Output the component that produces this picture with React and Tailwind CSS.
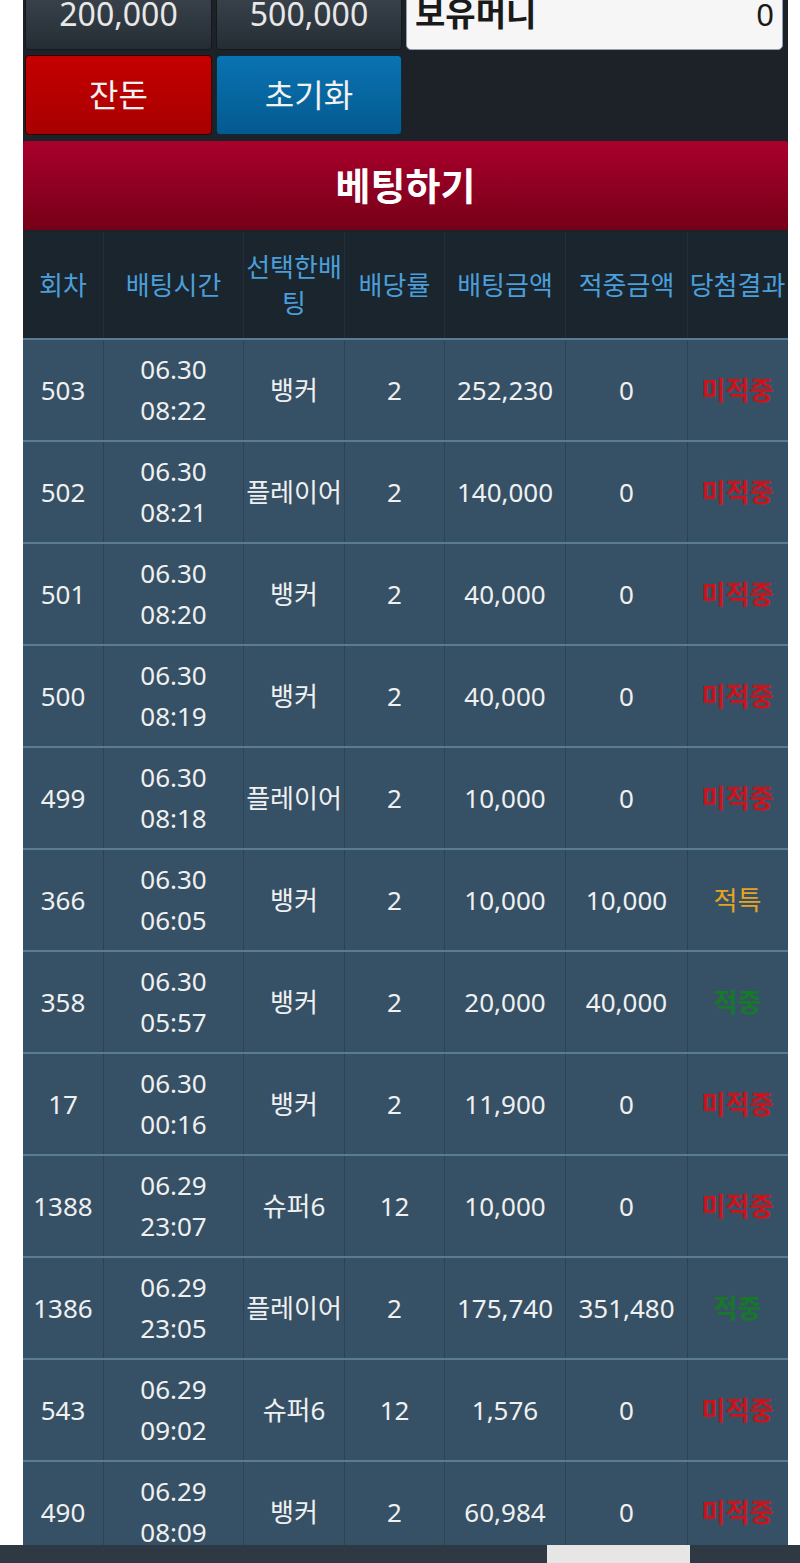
const rows = [
  ['503', '06.30', '08:22', '뱅커', '2', '252,230', '0', 'lose'],
  ['502', '06.30', '08:21', '플레이어', '2', '140,000', '0', 'lose'],
  ['501', '06.30', '08:20', '뱅커', '2', '40,000', '0', 'lose'],
  ['500', '06.30', '08:19', '뱅커', '2', '40,000', '0', 'lose'],
  ['499', '06.30', '08:18', '플레이어', '2', '10,000', '0', 'lose'],
  ['366', '06.30', '06:05', '뱅커', '2', '10,000', '10,000', 'push'],
  ['358', '06.30', '05:57', '뱅커', '2', '20,000', '40,000', 'win'],
  ['17', '06.30', '00:16', '뱅커', '2', '11,900', '0', 'lose'],
  ['1388', '06.29', '23:07', '슈퍼6', '12', '10,000', '0', 'lose'],
  ['1386', '06.29', '23:05', '플레이어', '2', '175,740', '351,480', 'win'],
  ['543', '06.29', '09:02', '슈퍼6', '12', '1,576', '0', 'lose'],
  ['490', '06.29', '08:09', '뱅커', '2', '60,984', '0', 'lose'],
];

const results = {
  lose: { label: '미적중', cls: 'text-[#c9141c] font-bold' },
  push: { label: '적특', cls: 'text-[#e6a321]' },
  win: { label: '적중', cls: 'text-[#17782a] font-bold' },
};

const cols = 'grid grid-cols-[80px_140px_101px_100px_121px_122px_100px]';

function Cell({ children, first, className = '' }) {
  return (
    <div className={`flex items-center justify-center text-center ${first ? '' : 'border-l border-[#2b4356]'} ${className}`}>
      {children}
    </div>
  );
}

export default function App() {
  return (
    <div className="min-h-[1563px] bg-white font-['Noto_Sans','Noto_Sans_CJK_KR',sans-serif] overflow-hidden">
      <div className="ml-[23px] w-[765px] bg-[#1c2227]">
        <div className="-mt-[30px] flex gap-[4px] pl-[2px] pr-[5px]">
          <button className="h-[80px] w-[187px] rounded-[4px] border border-[#15191d] bg-gradient-to-b from-[#434d57] to-[#252d34] pt-[30px] text-[32px] leading-none text-[#e8e8e8]">
            <span className="relative -top-[11px]">200,000</span>
          </button>
          <button className="h-[80px] w-[186px] rounded-[4px] border border-[#15191d] bg-gradient-to-b from-[#434d57] to-[#252d34] pt-[30px] text-[32px] leading-none text-[#e8e8e8]">
            <span className="relative -top-[11px]">500,000</span>
          </button>
          <div className="flex h-[80px] flex-1 items-end justify-between rounded-[5px] border border-[#8fa0b4] bg-[#f6f6f6] px-[8px] pb-[19px] text-[33px] leading-none text-[#1a1a1a]">
            <span className="font-bold">보유머니</span>
            <span className="text-[31px]">0</span>
          </div>
        </div>
        <div className="mt-[5px] flex gap-[4px] pl-[2px] pr-[5px]">
          <button className="h-[80px] w-[187px] rounded-[4px] border border-[#3a0000] bg-gradient-to-b from-[#c40000] to-[#a80000] text-[32px] text-[#f2f2f2]">
            잔돈
          </button>
          <button className="h-[80px] w-[186px] rounded-[4px] border border-[#0a2a40] bg-gradient-to-b from-[#0a73b2] to-[#045a8f] text-[32px] text-[#f2f2f2]">
            초기화
          </button>
        </div>
        <div className="mt-[6px] flex h-[89px] items-center justify-center rounded-t-[3px] bg-gradient-to-b from-[#aa002c] to-[#760018] text-[38px] font-bold text-white">
          베팅하기
        </div>
        <div className={`${cols} mt-[2px] h-[106px] bg-[#1b252e] text-[26px] leading-[36px] text-[#4a9fdb]`}>
          <Cell first>회차</Cell>
          <Cell className="border-[#222e39]">배팅시간</Cell>
          <Cell className="border-[#222e39]">선택한배<br />팅</Cell>
          <Cell className="border-[#222e39]">배당률</Cell>
          <Cell className="border-[#222e39]">배팅금액</Cell>
          <Cell className="border-[#222e39]">적중금액</Cell>
          <Cell className="border-[#222e39]">당첨결과</Cell>
        </div>
        {rows.map((r) => {
          const res = results[r[7]];
          return (
            <div key={r[0] + r[2]} className={`${cols} h-[102px] border-t-2 border-[#5a7c93] bg-[#365166] text-[26px] text-[#f0f0f0]`}>
              <Cell first>{r[0]}</Cell>
              <Cell className="leading-[41px]">{r[1]}<br />{r[2]}</Cell>
              <Cell>{r[3]}</Cell>
              <Cell>{r[4]}</Cell>
              <Cell>{r[5]}</Cell>
              <Cell>{r[6]}</Cell>
              <Cell className={res.cls}>{res.label}</Cell>
            </div>
          );
        })}
      </div>
      <div className="fixed bottom-0 left-0 flex h-[18px] w-full bg-[#2f3943]">
        <div className="ml-[547px] h-full w-[143px] bg-[#e6e6e6]" />
      </div>
    </div>
  );
}
